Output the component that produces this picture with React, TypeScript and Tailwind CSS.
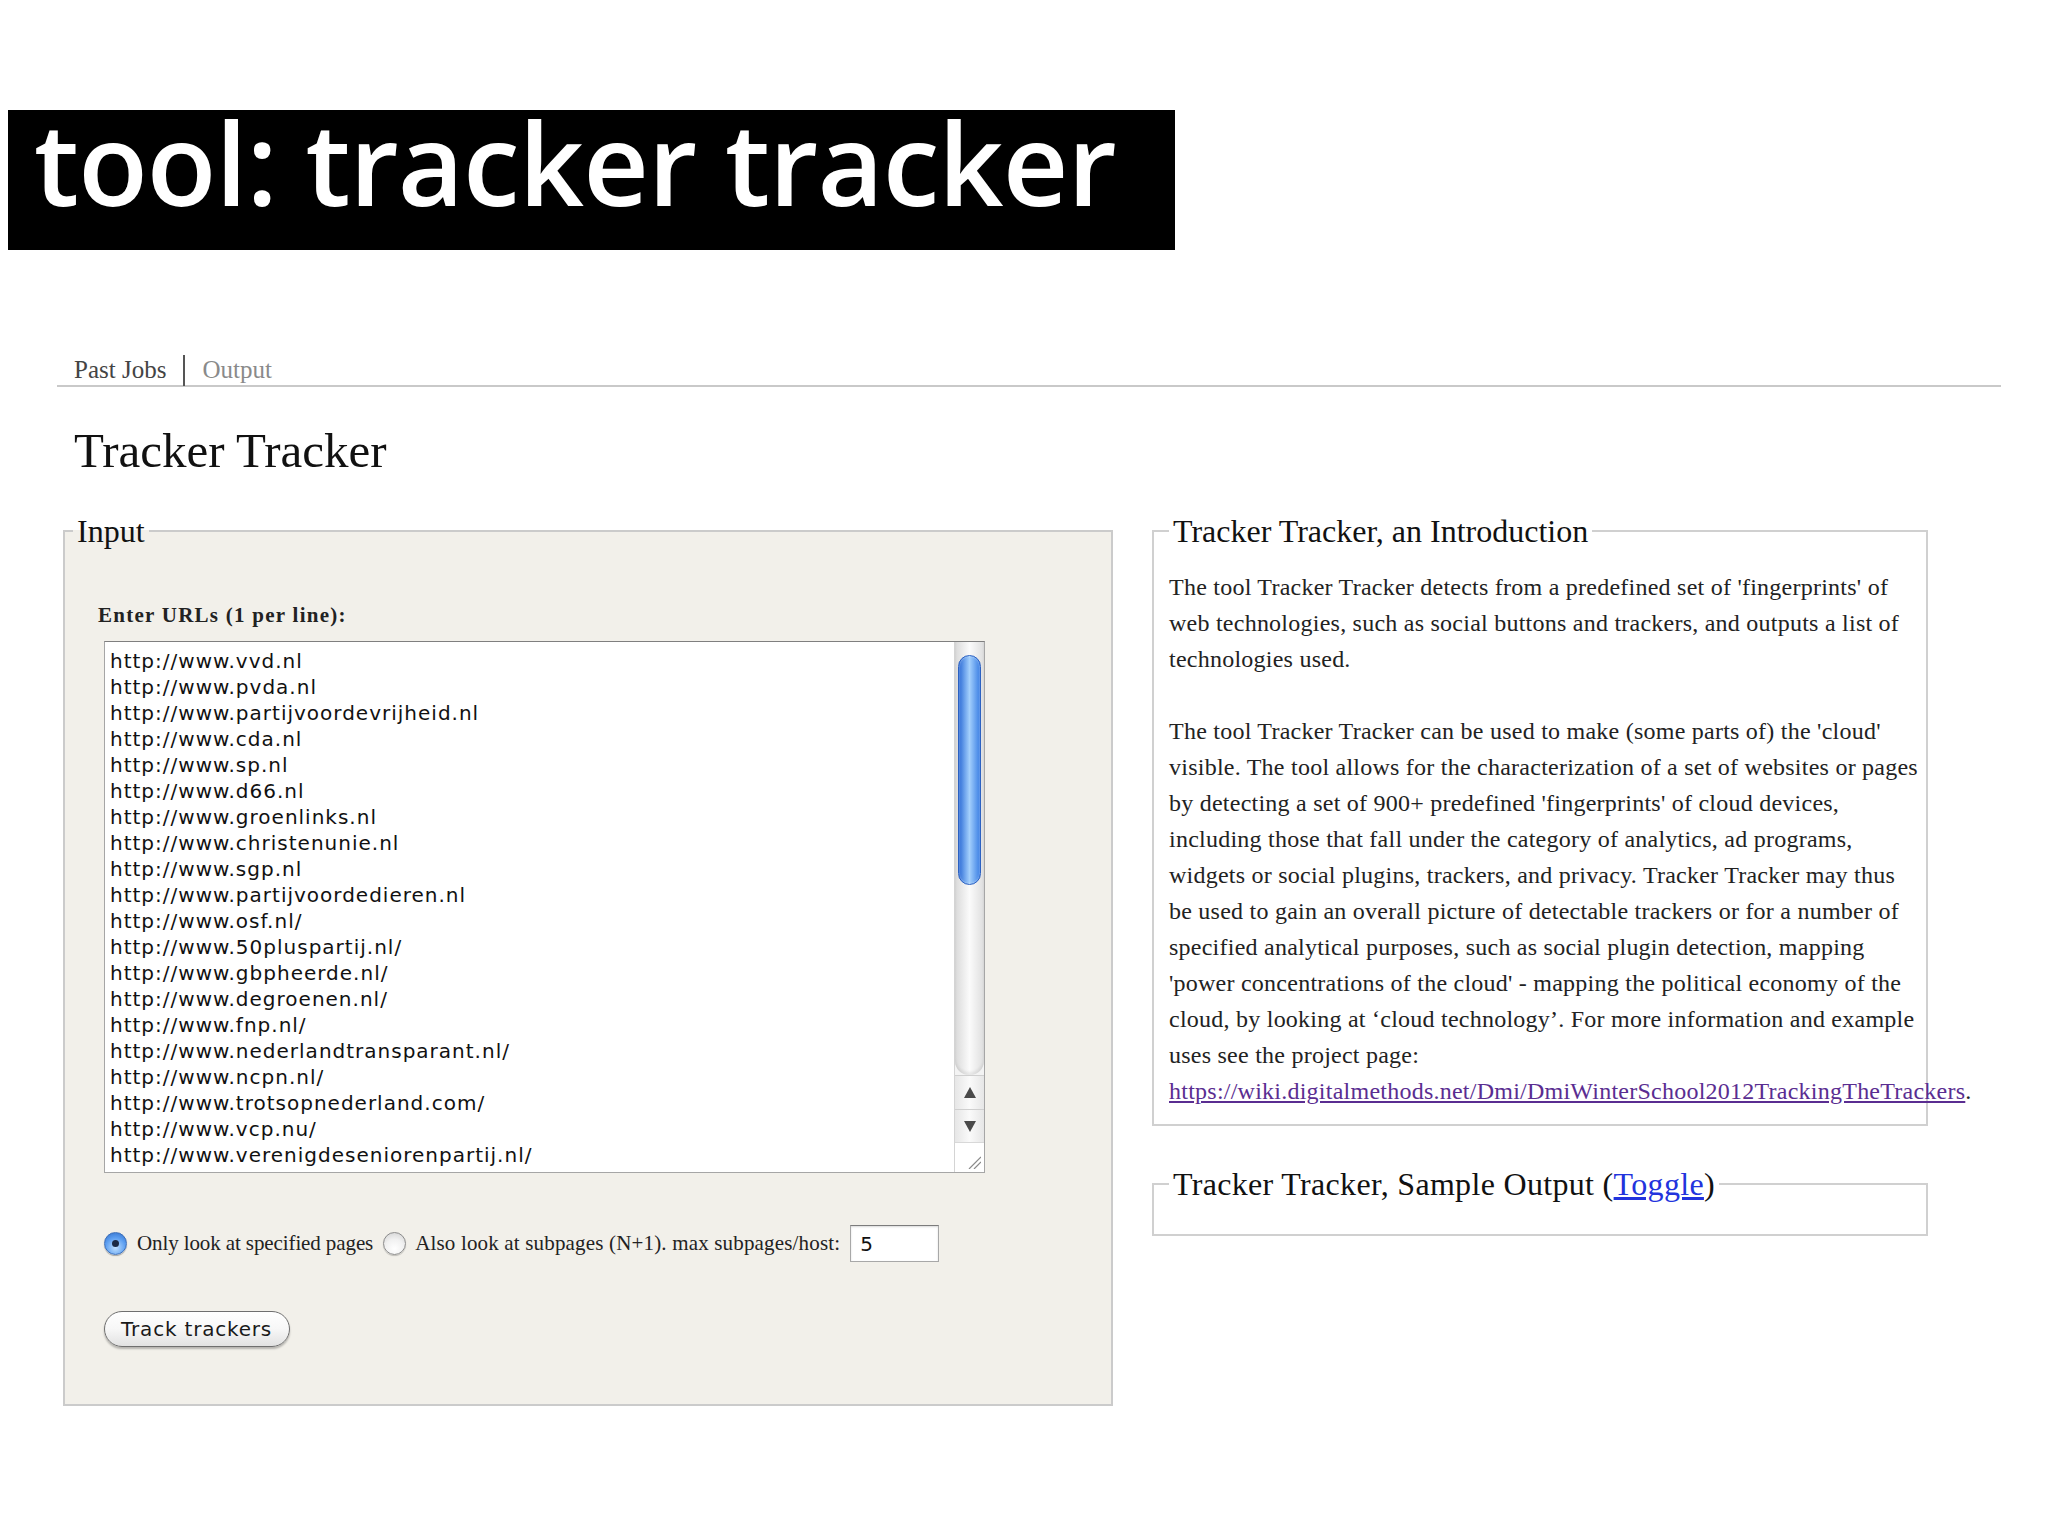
import React from "react";

const urls = [
  "http://www.vvd.nl",
  "http://www.pvda.nl",
  "http://www.partijvoordevrijheid.nl",
  "http://www.cda.nl",
  "http://www.sp.nl",
  "http://www.d66.nl",
  "http://www.groenlinks.nl",
  "http://www.christenunie.nl",
  "http://www.sgp.nl",
  "http://www.partijvoordedieren.nl",
  "http://www.osf.nl/",
  "http://www.50pluspartij.nl/",
  "http://www.gbpheerde.nl/",
  "http://www.degroenen.nl/",
  "http://www.fnp.nl/",
  "http://www.nederlandtransparant.nl/",
  "http://www.ncpn.nl/",
  "http://www.trotsopnederland.com/",
  "http://www.vcp.nu/",
  "http://www.verenigdeseniorenpartij.nl/",
];

const introLines = [
  "The tool Tracker Tracker detects from a predefined set of 'fingerprints' of",
  "web technologies, such as social buttons and trackers, and outputs a list of",
  "technologies used.",
];

const detailLines = [
  "The tool Tracker Tracker can be used to make (some parts of) the 'cloud'",
  "visible. The tool allows for the characterization of a set of websites or pages",
  "by detecting a set of 900+ predefined 'fingerprints' of cloud devices,",
  "including those that fall under the category of analytics, ad programs,",
  "widgets or social plugins, trackers, and privacy. Tracker Tracker may thus",
  "be used to gain an overall picture of detectable trackers or for a number of",
  "specified analytical purposes, such as social plugin detection, mapping",
  "'power concentrations of the cloud' - mapping the political economy of the",
  "cloud, by looking at \u2018cloud technology\u2019. For more information and example",
  "uses see the project page:",
];

const Scrollbar = () => (
  <div className="flex w-[30px] flex-col border-l border-[#d4d4d4] bg-[#f3f3f3]">
    <div className="flex flex-1 flex-col rounded-b-[14px] bg-gradient-to-r from-[#d9d9d9] via-[#fbfbfb] to-[#dedede] px-[3px] pt-[13px] shadow-[inset_0_-3px_3px_rgba(0,0,0,0.08)]">
      <div className="h-[230px] rounded-full border border-[#2b61c2] bg-gradient-to-r from-[#2d6cd6] via-[#a3cffc] to-[#3a7ee3] shadow-[inset_0_0_2px_rgba(255,255,255,0.6)]" />
    </div>
    <div className="flex h-[34px] items-center justify-center border-t border-[#cfcfcf] bg-gradient-to-r from-[#e6e6e6] via-[#fafafa] to-[#e6e6e6]">
      <svg width="12" height="11" viewBox="0 0 12 11">
        <polygon points="6,0 12,11 0,11" fill="#4a4a4a" />
      </svg>
    </div>
    <div className="flex h-[33px] items-center justify-center border-t border-[#cfcfcf] bg-gradient-to-r from-[#e6e6e6] via-[#fafafa] to-[#e6e6e6]">
      <svg width="12" height="11" viewBox="0 0 12 11">
        <polygon points="0,0 12,0 6,11" fill="#4a4a4a" />
      </svg>
    </div>
    <div className="flex h-[30px] items-end justify-end border-t border-[#d8d8d8] bg-white p-[3px]">
      <svg width="14" height="14" viewBox="0 0 14 14">
        <line x1="2" y1="14" x2="14" y2="2" stroke="#8a8a8a" strokeWidth="1.2" />
        <line x1="7" y1="14" x2="14" y2="7" stroke="#8a8a8a" strokeWidth="1.2" />
      </svg>
    </div>
  </div>
);

const Radio = ({ checked }: { checked?: boolean }) =>
  checked ? (
    <span className="flex h-[23px] w-[23px] shrink-0 items-center justify-center rounded-full border border-[#3d6fb8] bg-[radial-gradient(circle_at_50%_70%,#bfe0ff_0%,#5c9ef0_55%,#2f6cc8_100%)] shadow-[0_1px_1px_rgba(0,0,0,0.3)]">
      <span className="block h-[7px] w-[7px] rounded-full bg-[#1b2a44]" />
    </span>
  ) : (
    <span className="block h-[23px] w-[23px] shrink-0 rounded-full border border-[#8c8c8c] bg-[radial-gradient(circle_at_50%_75%,#ffffff_0%,#f1f1f1_50%,#cfcfcf_100%)] shadow-[0_1px_1px_rgba(0,0,0,0.2)]" />
  );

export default function App() {
  const serif = "font-['Liberation_Serif','Times_New_Roman',serif]";
  const sans = "font-['DejaVu_Sans',Verdana,sans-serif]";

  return (
    <div className="min-h-[1536px] w-[2048px] bg-white pt-[110px] text-[#222]">
      {/* slide title */}
      <div className="ml-[8px] h-[140px] w-[1167px] bg-black pl-[26px] pt-[2px]">
        <h1 className="font-['Open_Sans',sans-serif] text-[114px] font-semibold leading-[100px] tracking-[-0.008em] text-white whitespace-nowrap">
          tool: tracker tracker
        </h1>
      </div>

      {/* nav */}
      <div className={`${serif} ml-[57px] mr-[47px] mt-[102px] flex h-[35px] items-start border-b-2 border-[#c9c9c9] pl-[17px] text-[25px]`}>
        <div className="mt-[2px] flex h-[32px] items-center gap-[17px]">
          <span className="text-[#444]">Past Jobs</span>
          <span className="h-[31px] w-[2px] bg-[#555]" />
          <span className="text-[#8a8a8a]">Output</span>
        </div>
      </div>

      <h2 className={`${serif} ml-[74px] mt-[36px] text-[49px] leading-[56px] text-[#111]`}>Tracker Tracker</h2>

      <div className={`${serif} ml-[63px] mt-[34px] flex items-start gap-[39px]`}>
        {/* input form */}
        <fieldset className="w-[1050px] min-w-0 border-2 border-[#cbcbcb] bg-[#f2f0ea] pb-[57px] pl-[35px]">
          <legend className="ml-[-27px] px-[4px] text-[32px] leading-[36px] text-[#111]">Input</legend>
          <div className="pt-[54px]">
            <div className="ml-[-2px] text-[21px] font-bold leading-[24px] tracking-[0.06em] text-[#222]">
              Enter URLs (1 per line):
            </div>
            <div className="ml-[4px] mt-[14px] flex h-[532px] w-[881px] border border-[#a6a6a6] border-t-[#7f7f7f] bg-white">
              <div className={`${sans} flex-1 overflow-hidden pl-[5px] pt-[6px] text-[20px] leading-[26px] tracking-[0.05em] text-[#111] whitespace-nowrap`}>
                {urls.map((u) => (
                  <div key={u}>{u}</div>
                ))}
              </div>
              <Scrollbar />
            </div>

            <div className="ml-[4px] mt-[52px] flex h-[37px] items-center text-[21px] tracking-[-0.005em] text-[#222]">
              <Radio checked />
              <span className="ml-[10px] whitespace-nowrap">Only look at specified pages</span>
              <span className="ml-[10px]">
                <Radio />
              </span>
              <span className="ml-[9px] whitespace-nowrap tracking-[0.008em]">
                Also look at subpages (N+1). max subpages/host:
              </span>
              <div className={`${sans} ml-[10px] flex h-[37px] w-[89px] items-center border border-[#a8a8a8] border-t-[#7c7c7c] bg-white pl-[9px] text-[20px] text-[#111] shadow-[inset_0_1px_2px_rgba(0,0,0,0.15)]`}>
                5
              </div>
            </div>

            <button
              className={`${sans} ml-[4px] mt-[49px] flex h-[36px] w-[186px] items-center rounded-full border-[1.5px] border-[#6f6f6f] bg-gradient-to-b from-white via-[#f7f7f7] to-[#e2e2e2] pl-[16px] text-[20px] tracking-[0.04em] text-[#1a1a1a] shadow-[0_2px_2px_rgba(0,0,0,0.25)]`}
            >
              Track trackers
            </button>
          </div>
        </fieldset>

        {/* right column */}
        <div className="flex w-[776px] flex-col">
          <fieldset className="w-[776px] min-w-0 border-2 border-[#d0d0d0] bg-white pb-[15px] pl-[15px]">
            <legend className="px-[4px] text-[32px] leading-[36px] text-[#111]">
              Tracker Tracker, an Introduction
            </legend>
            <div className="pt-[20px] text-[24px] leading-[36px] tracking-[0.01em] text-[#222] whitespace-nowrap">
              {introLines.map((l) => (
                <div key={l}>{l}</div>
              ))}
              <div className="h-[36px]" />
              {detailLines.map((l) => (
                <div key={l}>{l}</div>
              ))}
              <div>
                <a href="#" className="text-[#5a2d91] underline">
                  https://wiki.digitalmethods.net/Dmi/DmiWinterSchool2012TrackingTheTrackers
                </a>
                .
              </div>
            </div>
          </fieldset>

          <fieldset className="mt-[40px] h-[70px] w-[776px] min-w-0 border-2 border-[#d0d0d0] bg-white pl-[15px]">
            <legend className="px-[4px] text-[32px] leading-[36px] tracking-[0.01em] text-[#111]">
              Tracker Tracker, Sample Output (
              <a href="#" className="text-[#2233dd] underline">
                Toggle
              </a>
              )
            </legend>
          </fieldset>
        </div>
      </div>
    </div>
  );
}
